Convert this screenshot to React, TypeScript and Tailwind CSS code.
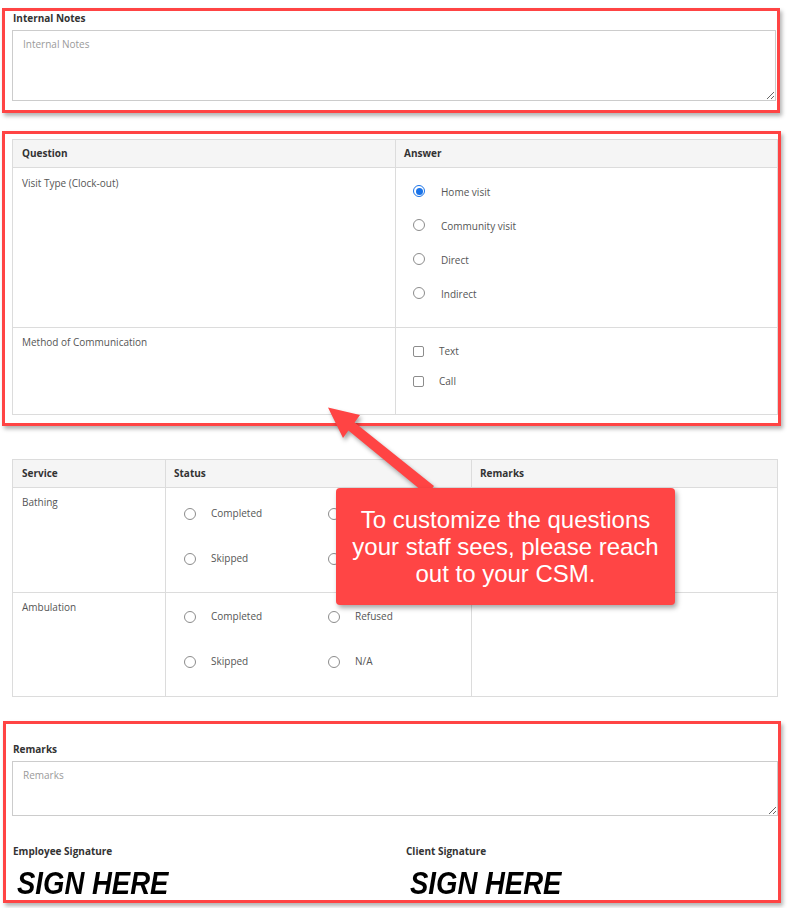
import React from 'react';

const red = 'border-[#ff4444]';

function Radio({ checked = false }: { checked?: boolean }) {
  return checked ? (
    <span className="w-[12px] h-[12px] rounded-full border border-[#1a73e8] flex items-center justify-center shrink-0 bg-white">
      <span className="w-[7px] h-[7px] rounded-full bg-[#1a73e8]" />
    </span>
  ) : (
    <span className="w-[12px] h-[12px] rounded-full border border-[#8c8c8c] shrink-0 bg-white" />
  );
}

function Checkbox() {
  return <span className="w-[11px] h-[11px] rounded-[2px] border border-[#8c8c8c] shrink-0 bg-white" />;
}

// the callout covers the labels of the right-hand options in the first row
function StatusCell({ pt, covered = false }: { pt: string; covered?: boolean }) {
  return (
    <div className={`border-l border-[#dcdcdc] pl-[18px] ${pt} grid grid-cols-[144px_1fr] auto-rows-[45px]`}>
      <div className="flex items-center gap-[15px]"><Radio /><span>Completed</span></div>
      <div className="flex items-center gap-[15px]"><Radio />{!covered && <span>Refused</span>}</div>
      <div className="flex items-center gap-[15px]"><Radio /><span>Skipped</span></div>
      <div className="flex items-center gap-[15px]"><Radio />{!covered && <span>N/A</span>}</div>
    </div>
  );
}

export default function App() {
  const visitTypes = ['Home visit', 'Community visit', 'Direct', 'Indirect'];

  return (
    <div className="relative w-[794px] h-[908px] bg-white overflow-hidden font-['Open_Sans',sans-serif] text-[10px] text-[#555]">
      {/* Internal notes */}
      <div className={`mt-[8px] ml-[2px] w-[778px] h-[105px] border-[3px] ${red} shadow-[2px_3px_4px_rgba(0,0,0,0.3)] pl-[7px] pr-[1px]`}>
        <div className="leading-[14px] font-bold text-[#333] pl-[1px]">Internal Notes</div>
        <textarea
          placeholder="Internal Notes"
          className="mt-[5px] block w-full h-[71px] border border-[#cccccc] pl-[10px] pt-[6px] leading-[14px] text-[10px] outline-none placeholder:text-[#9a9a9a]"
        />
      </div>

      {/* Questions */}
      <div className={`mt-[18px] ml-[2px] w-[779px] h-[295px] border-[3px] ${red} shadow-[2px_3px_4px_rgba(0,0,0,0.3)] pt-[5px] pl-[7px]`}>
        <div className="w-[766px] border border-[#dcdcdc]">
          <div className="grid grid-cols-[382px_1fr] h-[28px] bg-[#f5f5f5] border-b border-[#dcdcdc] font-bold text-[#333]">
            <div className="flex items-center pl-[9px]">Question</div>
            <div className="flex items-center pl-[8px] border-l border-[#dcdcdc]">Answer</div>
          </div>
          <div className="grid grid-cols-[382px_1fr] h-[160px] border-b border-[#dcdcdc]">
            <div className="pl-[9px] pt-[8px] leading-[14px]">Visit Type (Clock-out)</div>
            <div className="border-l border-[#dcdcdc] pl-[17px] pt-[6px]">
              {visitTypes.map((v, i) => (
                <div key={v} className="h-[34px] flex items-center gap-[16px]">
                  <Radio checked={i === 0} />
                  <span className="pt-[3px]">{v}</span>
                </div>
              ))}
            </div>
          </div>
          <div className="grid grid-cols-[382px_1fr] h-[86px]">
            <div className="pl-[9px] pt-[7px] leading-[14px]">Method of Communication</div>
            <div className="border-l border-[#dcdcdc] pl-[17px] pt-[8px]">
              {['Text', 'Call'].map((v) => (
                <div key={v} className="h-[30px] flex items-center gap-[15px]">
                  <Checkbox />
                  <span>{v}</span>
                </div>
              ))}
            </div>
          </div>
        </div>
      </div>

      {/* Services */}
      <div className="mt-[33px] ml-[12px] w-[766px] border border-[#dcdcdc]">
        <div className="grid grid-cols-[152px_306px_1fr] h-[28px] bg-[#f5f5f5] border-b border-[#dcdcdc] font-bold text-[#333]">
          <div className="flex items-center pl-[9px]">Service</div>
          <div className="flex items-center pl-[8px] border-l border-[#dcdcdc]">Status</div>
          <div className="flex items-center pl-[8px] border-l border-[#dcdcdc]">Remarks</div>
        </div>
        <div className="grid grid-cols-[152px_306px_1fr] h-[105px] border-b border-[#dcdcdc]">
          <div className="pl-[9px] pt-[7px] leading-[14px]">Bathing</div>
          <StatusCell pt="pt-[3px]" covered />
          <div className="border-l border-[#dcdcdc]" />
        </div>
        <div className="grid grid-cols-[152px_306px_1fr] h-[103px]">
          <div className="pl-[9px] pt-[7px] leading-[14px]">Ambulation</div>
          <StatusCell pt="pt-[1px]" />
          <div className="border-l border-[#dcdcdc]" />
        </div>
      </div>

      {/* Remarks and signatures */}
      <div className={`mt-[24px] ml-[3px] w-[778px] h-[182px] border-[3px] ${red} shadow-[2px_3px_4px_rgba(0,0,0,0.3)] pl-[6px] pt-[18px] overflow-hidden`}>
        <div className="leading-[14px] font-bold text-[#333] pl-[1px]">Remarks</div>
        <textarea
          placeholder="Remarks"
          className="mt-[5px] block w-[766px] h-[55px] border border-[#cccccc] pl-[10px] pt-[6px] leading-[14px] text-[10px] outline-none placeholder:text-[#9a9a9a]"
        />
        <div className="grid grid-cols-[393px_1fr] mt-[28px]">
          {['Employee Signature', 'Client Signature'].map((s) => (
            <div key={s}>
              <div className="leading-[14px] font-bold text-[#333] pl-[1px]">{s}</div>
              <div className="mt-[10px] ml-[5px] leading-[30px] text-[32px] font-bold italic text-black scale-x-[0.86] origin-left font-['Liberation_Sans',Arial,sans-serif]">
                SIGN HERE
              </div>
            </div>
          ))}
        </div>
      </div>

      {/* Annotation arrow */}
      <svg
        className="absolute left-[320px] top-[400px] drop-shadow-[2px_3px_2px_rgba(0,0,0,0.35)]"
        width="130"
        height="100"
        viewBox="0 0 130 100"
      >
        <polygon points="8,7.5 40,15 34.6,22.6 114,86 107,95 28.4,30.4 23,38" fill="#ff4444" />
      </svg>

      {/* Callout */}
      <div className="absolute left-[336px] top-[488px] w-[339px] h-[117px] rounded-[4px] bg-[#ff4545] shadow-[2px_3px_5px_rgba(0,0,0,0.35)] flex items-center justify-center text-center text-white text-[24px] leading-[27px] font-['Liberation_Sans',Arial,sans-serif]">
        <div>
          To customize the questions
          <br />
          your staff sees, please reach
          <br />
          out to your CSM.
        </div>
      </div>
    </div>
  );
}
